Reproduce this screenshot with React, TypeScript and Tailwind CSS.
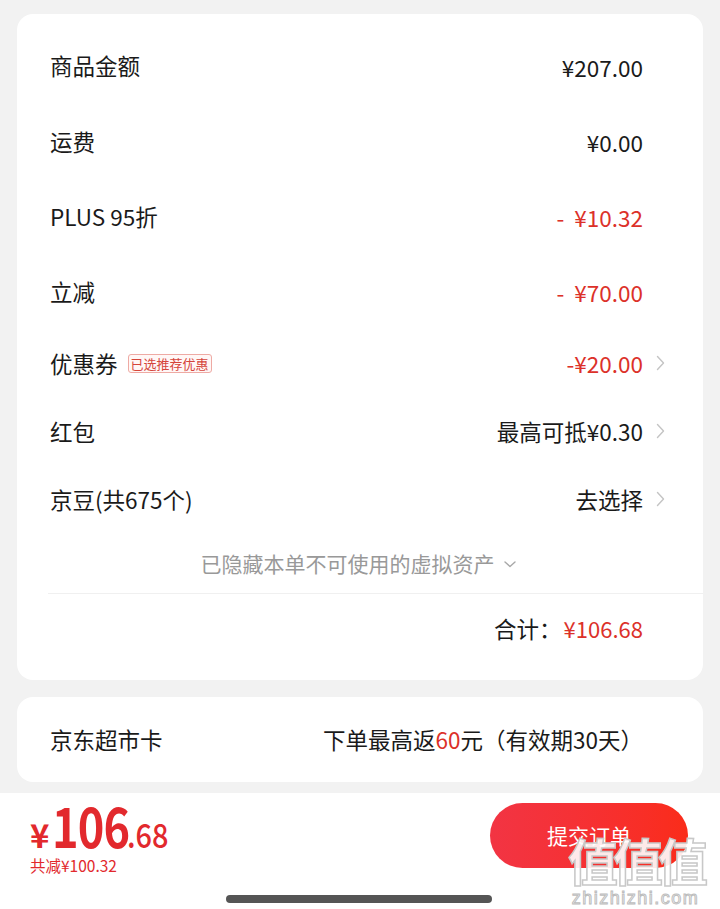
import React from "react";

const F = "font-['Noto_Sans_CJK_SC','Noto_Sans',sans-serif]";

function Chevron() {
  return (
    <svg width="9" height="16" viewBox="0 0 9 16" fill="none">
      <polyline points="1.5,1.5 7.5,8 1.5,14.5" stroke="#c4c4c4" strokeWidth="1.4" strokeLinecap="round" strokeLinejoin="round" />
    </svg>
  );
}

type RowProps = {
  label: React.ReactNode;
  value: React.ReactNode;
  chevron?: boolean;
  h: string;
};

function Row({ label, value, chevron, h }: RowProps) {
  return (
    <div className={`flex items-center pl-[33px] pr-[38px] ${h}`}>
      <div className="flex flex-1 items-center text-[22.5px] text-[#1a1a1a] leading-none">{label}</div>
      <div className="text-[22.5px] leading-none">{value}</div>
      <div className="flex w-[22px] justify-end">{chevron ? <Chevron /> : null}</div>
    </div>
  );
}

export default function App() {
  return (
    <div className={`${F} w-[720px] h-[909px] bg-[#f2f2f2] flex flex-col overflow-hidden relative`}>
      <div className="pt-[14px] px-[17px]">
        <div className="bg-white rounded-[16px] pt-[13px] pb-[18px]">
          <Row h="h-[76px]" label="商品金额" value={<span className="text-[#1a1a1a] relative top-[2px]">¥207.00</span>} />
          <Row h="h-[76px]" label="运费" value={<span className="text-[#1a1a1a] relative top-[1px]">¥0.00</span>} />
          <Row h="h-[74px]" label="PLUS 95折" value={<span className="text-[#dc3129] relative top-[1px]">-&nbsp;&nbsp;¥10.32</span>} />
          <Row h="h-[76px]" label="立减" value={<span className="text-[#dc3129] relative top-[1px]">-&nbsp;&nbsp;¥70.00</span>} />
          <Row
            h="h-[68px]"
            chevron
            label={
              <>
                <span>优惠券</span>
                <span className="ml-[10px] text-[13px] leading-none text-[#d5453b] border border-[#eeaaa4] bg-[#fff7f6] rounded-[3px] px-[2px] py-[2px]">
                  已选推荐优惠
                </span>
              </>
            }
            value={<span className="text-[#dc3129]">-¥20.00</span>}
          />
          <Row h="h-[68px]" chevron label="红包" value={<span className="text-[#1a1a1a]">最高可抵¥0.30</span>} />
          <Row h="h-[68px]" chevron label="京豆(共675个)" value={<span className="text-[#1a1a1a]">去选择</span>} />
          <div className="h-[60px] flex items-center justify-center pr-[4px]">
            <span className="text-[21px] text-[#999999] leading-none">已隐藏本单不可使用的虚拟资产</span>
            <svg className="ml-[9px] mt-[3px]" width="12" height="7" viewBox="0 0 12 7" fill="none">
              <polyline points="1,1 6,5.5 11,1" stroke="#a8a8a8" strokeWidth="1.4" strokeLinecap="round" strokeLinejoin="round" />
            </svg>
          </div>
          <div className="ml-[31px] h-px bg-[#f0f0f0]" />
          <div className="h-[68px] flex items-center justify-end pr-[60px]">
            <span className="text-[22.5px] text-[#1a1a1a] leading-none">合计：</span>
            <span className="text-[22px] text-[#dc3129] leading-none ml-[2px]">¥106.68</span>
          </div>
        </div>
        <div className="bg-white rounded-[16px] mt-[17px] h-[85px] flex items-center pl-[33px] pr-[60px]">
          <span className="flex-1 text-[22.5px] text-[#1a1a1a] leading-none">京东超市卡</span>
          <span className="text-[22.5px] text-[#1a1a1a] leading-none">
            下单最高返<span className="text-[#dc3129]">60</span>元（有效期30天）
          </span>
        </div>
      </div>
      <div className="mt-[11px] flex-1 bg-white flex flex-col">
        <div className="flex items-start justify-between pl-[30px] pr-[32px] pt-[10px]">
          <div className="flex flex-col text-[#e2292d]">
            <div className="flex items-baseline leading-[46px] h-[46px] -mt-[2px]">
              <span className="text-[33px] font-semibold mr-[3px]">¥</span>
              <span className="inline-block w-[75px] whitespace-nowrap">
                <span className="inline-block origin-left scale-x-[0.82] text-[55px] font-semibold tracking-[-1px]">106</span>
              </span>
              <span className="inline-block w-[40px] whitespace-nowrap">
                <span className="inline-block origin-left scale-x-[0.85] text-[34px] font-medium">.68</span>
              </span>
            </div>
            <span className="text-[15.5px] leading-none mt-[11px]">共减¥100.32</span>
          </div>
          <div className="w-[198px] h-[65px] rounded-full bg-gradient-to-r from-[#f23443] to-[#fa2c19] flex items-center justify-center">
            <span className="text-white text-[21px] leading-none">提交订单</span>
          </div>
        </div>
        <div className="flex justify-center mt-[21px] pr-[3px]">
          <div className="w-[266px] h-[8px] rounded-full bg-[#555555]" />
        </div>
      </div>
      <div className="absolute left-[568px] top-[834px] flex flex-col items-center pointer-events-none">
        <span className="text-[50px] leading-none font-bold text-white/90 tracking-[-5px] [-webkit-text-stroke:1.5px_#c8c8c8]">值值值</span>
        <span className="text-[18px] leading-none mt-[5px] text-white tracking-[1.5px] [-webkit-text-stroke:1px_#bdbdbd] font-['Liberation_Sans',sans-serif]">zhizhizhi.com</span>
      </div>
    </div>
  );
}
